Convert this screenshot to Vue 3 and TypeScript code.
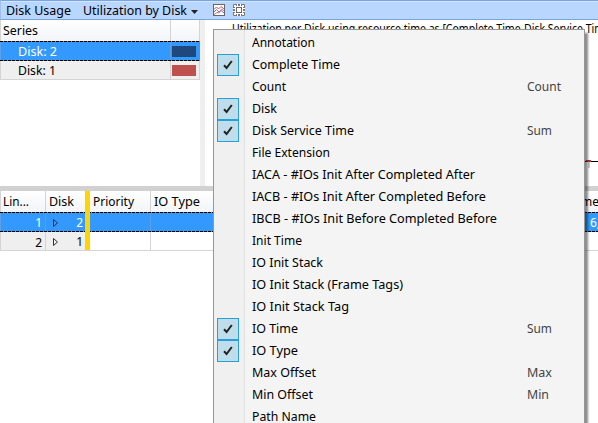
<script setup lang="ts">
interface MenuEntry {
  label: string
  width: number
  checked?: boolean
  aggregate?: string
}

const entries: MenuEntry[] = [
  { label: 'Annotation', width: 63 },
  { label: 'Complete Time', width: 88, checked: true },
  { label: 'Count', width: 34, aggregate: 'Count' },
  { label: 'Disk', width: 25, checked: true },
  { label: 'Disk Service Time', width: 102, checked: true, aggregate: 'Sum' },
  { label: 'File Extension', width: 78 },
  { label: 'IACA - #IOs Init After Completed After', width: 223 },
  { label: 'IACB - #IOs Init After Completed Before', width: 234 },
  { label: 'IBCB - #IOs Init Before Completed Before', width: 245 },
  { label: 'Init Time', width: 50 },
  { label: 'IO Init Stack', width: 71 },
  { label: 'IO Init Stack (Frame Tags)', width: 151 },
  { label: 'IO Init Stack Tag', width: 97 },
  { label: 'IO Time', width: 46, checked: true, aggregate: 'Sum' },
  { label: 'IO Type', width: 46, checked: true },
  { label: 'Max Offset', width: 64, aggregate: 'Max' },
  { label: 'Min Offset', width: 61, aggregate: 'Min' },
  { label: 'Path Name', width: 64 },
]
const aggWidth: Record<string, number> = { Count: 34, Sum: 25, Max: 25, Min: 22 }
</script>

<template>
  <div class="window">
    <header class="toolbar">
      <svg class="tx title" width="66" height="18"><text x="0" y="13" textLength="65" lengthAdjust="spacingAndGlyphs">Disk Usage</text></svg>
      <svg class="tx preset" width="105" height="18"><text x="0" y="13" textLength="104" lengthAdjust="spacingAndGlyphs">Utilization by Disk</text></svg>
      <svg class="caret" width="7" height="4"><path d="M0 0H7L3.5 4Z" fill="#222" /></svg>
      <svg class="icon graph" width="12" height="12" viewBox="0 0 12 12">
        <rect x=".5" y=".5" width="11" height="11" fill="#fff" stroke="#666" />
        <path d="M1 5.5L3.5 3L5.5 5L8 2.5L11 5" fill="none" stroke="#d65050" />
        <path d="M1 8L3.5 5.5L6 8L8 6.5L11 9" fill="none" stroke="#4a84c4" />
        <path d="M1 10.5L4 8.5L6 9L8.5 5L11 7" fill="none" stroke="#d65050" stroke-width=".8" />
      </svg>
      <svg class="icon" width="12" height="12" viewBox="0 0 12 12">
        <rect width="12" height="12" fill="#777" />
        <path d="M0 0h3v2h1v-2h1v2h2v-2h1v2h1v-2h3v3h-2v1h2v1h-2v2h2v1h-2v1h2v3h-3v-2h-1v2h-1v-2h-2v2h-1v-2h-1v2h-3v-3h2v-1h-2v-1h2v-2h-2v-1h2v-1h-2z" fill="#fff" />
        <rect x="3.5" y="3.5" width="5" height="5" fill="#fff" stroke="#666" />
        <path d="M.5 3V.5H3M9 .5h2.500V3M11.500 9v2.500H9M3 11.500H.5V9" fill="none" stroke="#777" />
      </svg>
    </header>

    <main class="upper">
      <section class="series">
        <div class="srow head"><span class="name"><svg class="tx" width="40" height="18"><text x="0" y="13" textLength="35" lengthAdjust="spacingAndGlyphs">Series</text></svg></span><span class="swcell"></span></div>
        <div class="srow selected"><span class="name"><svg class="tx" width="44" height="18"><text x="0" y="13" textLength="39" lengthAdjust="spacingAndGlyphs">Disk: 2</text></svg></span><span class="swcell"><i class="swatch navy"></i></span></div>
        <div class="srow plain"><span class="name"><svg class="tx" width="44" height="18"><text x="0" y="13" textLength="38" lengthAdjust="spacingAndGlyphs">Disk: 1</text></svg></span><span class="swcell"><i class="swatch red"></i></span></div>
      </section>
      <div class="vsplit"></div>
      <section class="chart">
        <svg class="tx" width="393" height="166">
          <text x="27" y="13" textLength="378" lengthAdjust="spacingAndGlyphs">Utilization per Disk using resource time as [Complete Time-Disk Service Time</text>
          <path d="M365 141.5H393" stroke="#000" />
          <path d="M381 141h5" stroke="#b0383a" stroke-width="2" />
          <path d="M384 142v6" stroke="#ccc" stroke-width="2" />
        </svg>
      </section>
    </main>
    <div class="hsplit"></div>

    <section class="grid">
      <div class="grow head">
        <span class="c line"><svg class="tx" width="30" height="18"><text x="0" y="13" textLength="26" lengthAdjust="spacingAndGlyphs">Lin...</text></svg></span>
        <span class="c disk"><svg class="tx" width="30" height="18"><text x="0" y="13" textLength="25" lengthAdjust="spacingAndGlyphs">Disk</text></svg></span>
        <span class="bar"></span>
        <span class="c prio"><svg class="tx" width="50" height="18"><text x="0" y="13" textLength="41" lengthAdjust="spacingAndGlyphs">Priority</text></svg></span>
        <span class="c io"><svg class="tx" width="50" height="18"><text x="0" y="13" textLength="46" lengthAdjust="spacingAndGlyphs">IO Type</text></svg></span>
        <span class="c tail">me</span>
      </div>
      <div v-for="n in 2" :key="n" class="grow" :class="n === 1 ? 'selected' : 'second'">
        <span class="c line num">{{ n }}</span>
        <span class="c disk num"><svg class="expand" width="5" height="8"><path d="M.5 .5V7.5L4.5 4Z" fill="none" stroke="currentColor" /></svg>{{ 3 - n }}</span>
        <span class="bar"></span>
        <span class="c prio"></span>
        <span class="c io"></span>
        <span class="c tail"><template v-if="n === 1">6,</template></span>
      </div>
    </section>

    <div class="menu">
      <div v-for="e in entries" :key="e.label" class="item">
        <span class="gutter"><span v-if="e.checked" class="check"><svg width="10" height="10" viewBox="0 0 10 10"><path d="M1 5.2L3.6 8L8.8 1" fill="none" stroke="#212121" stroke-width="2" /></svg></span></span>
        <svg class="tx label" width="275" height="22"><text x="0" y="15" :textLength="e.width" lengthAdjust="spacingAndGlyphs">{{ e.label }}</text></svg>
        <svg v-if="e.aggregate" class="tx agg" width="50" height="22"><text x="0" y="15" :textLength="aggWidth[e.aggregate]" lengthAdjust="spacingAndGlyphs">{{ e.aggregate }}</text></svg>
      </div>
    </div>
  </div>
</template>

<style>
body { background: #fff; overflow: hidden; }
</style>

<style scoped>
* { box-sizing: border-box; }
.window { position: relative; width: 598px; height: 423px; overflow: hidden; background: #fff; color: #000; font: 12px/18px "Noto Sans", "Open Sans", sans-serif; }
.tx { display: block; flex: none; fill: currentColor; overflow: hidden; }
.toolbar { display: flex; align-items: center; height: 20px; padding-left: 6px; background: #b8d6ff; border-top: 1px solid #7ba4dc; border-bottom: 1px solid #7ba4dc; border-left: 1px solid #a0bfe9; box-shadow: inset 0 1px #d1e4ff; }
.title { margin-right: 11px; margin-left: -1px; margin-top: 2px; }
.preset { margin-top: 2px; }
.caret { margin-left: 3px; margin-top: 3px; }
.icon { margin-left: 8px; }
.graph { margin-left: 15px; }
.upper { display: flex; height: 166px; }
.series { width: 200px; }
.srow { display: flex; height: 19px; }
.srow .name { width: 171px; border-right: 1px solid #d4d4d4; border-left: 1px solid #d4d4d4; padding: 1px 0 0 17px; }
.srow.head { height: 21px; background: linear-gradient(#fff, #f2f4f7); }
.srow.head .name { padding: 2px 0 0 2px; }
.swcell { width: 29px; display: flex; align-items: center; padding-left: 1px; border-right: 1px solid #d4d4d4; }
.swatch { width: 24px; height: 11px; }
.navy { background: #1f497d; }
.red { background: #c0504d; }
.selected { position: relative; background: #3399ff; color: #fff; }
.selected::after { content: ""; position: absolute; inset: 0; background: repeating-linear-gradient(90deg, #000 0 3px, transparent 3px 4px) 0 0 / 100% 1px no-repeat, repeating-linear-gradient(90deg, #000 0 3px, transparent 3px 4px) 0 100% / 100% 1px no-repeat; }
.srow.selected { height: 20px; }
.srow.selected .name { padding-top: 2px; border-color: #5c9fe2; }
.srow.selected .swcell { border-color: #3399ff; }
.srow.plain { background: #efefef; border-bottom: 1px solid #d4d4d4; }
.vsplit { width: 5px; background: #efefef; }
.chart { width: 393px; overflow: hidden; }
.hsplit { height: 5px; background: #d1d1d1; }
.grow { display: flex; height: 20px; }
.grow.head { height: 21px; background: linear-gradient(#fff, #f2f4f7); }
.c { flex: none; display: block; border-right: 1px solid #d4d4d4; }
.head .c { padding: 2px 0 0 3px; }
.c.line { width: 46px; border-left: 1px solid #d4d4d4; }
.head .c.line { padding-left: 2px; }
.c.disk { width: 39px; border-right: 0; }
.bar { flex: none; width: 5px; background: #ffd500; position: relative; z-index: 1; }
.prio { width: 61px; }
.io { width: 431px; }
.tail { width: 60px; padding: 2px 0 0 8px; }
.head .c.tail { padding-left: 0; text-indent: -1px; }
.num { text-align: right; padding: 2px 3px 0 0; }
.disk.num { display: flex; align-items: center; justify-content: space-between; padding: 2px 2px 0 7px; }
.expand { color: #333; }
.grow.selected .c { border-color: #5c9fe2; }
.grow.second { border-bottom: 1px solid #d4d4d4; height: 19px; }
.second .num { background: #efefef; }
.menu { position: absolute; left: 213px; top: 29px; width: 372px; height: 410px; padding: 2px 0 0 3px; border: 1px solid #979797; background: linear-gradient(90deg, #f0f0f0 30px, #e1e1e1 30px 31px, #f4f4f4 31px); box-shadow: 3px 4px 2px rgba(0, 0, 0, .45); }
.item { display: flex; align-items: center; height: 22px; }
.gutter { width: 22px; height: 22px; }
.check { display: flex; align-items: center; justify-content: center; height: 22px; border: 1px solid #26a0da; background: #c0ddeb; }
.label { margin-left: 13px; }
.agg { color: #444; }
</style>
